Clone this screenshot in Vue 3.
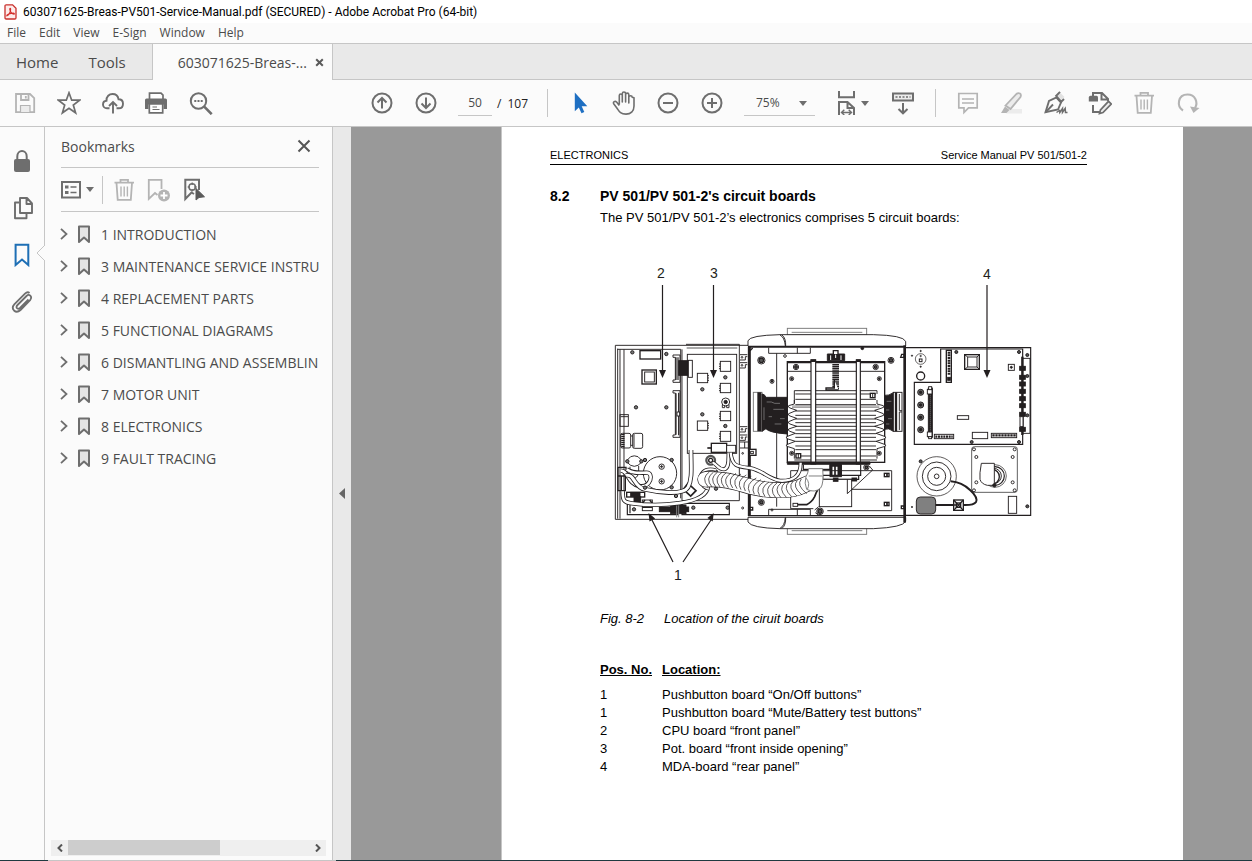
<script setup>
import { ref } from 'vue'

const menus = ['File', 'Edit', 'View', 'E-Sign', 'Window', 'Help']
const page = ref('50')
const zoom = ref('75%')
const bookmarks = [
  '1 INTRODUCTION',
  '3 MAINTENANCE SERVICE INSTRU',
  '4 REPLACEMENT PARTS',
  '5 FUNCTIONAL DIAGRAMS',
  '6 DISMANTLING AND ASSEMBLIN',
  '7 MOTOR UNIT',
  '8 ELECTRONICS',
  '9 FAULT TRACING',
]
const boards = [
  ['1', 'Pushbutton board “On/Off buttons”'],
  ['1', 'Pushbutton board “Mute/Battery test buttons”'],
  ['2', 'CPU board “front panel”'],
  ['3', 'Pot. board “front inside opening”'],
  ['4', 'MDA-board “rear panel”'],
]

const frontDots = [[97, 97], [199, 102], [108, 262], [199, 262], [82, 424], [124, 424], [135, 420], [215, 420], [215, 502], [135, 503], [228, 528], [102, 568], [307, 208], [376, 172], [307, 283], [376, 318], [280, 563], [383, 563], [348, 455], [303, 480], [348, 506]]
const frontChips = [[361, 124, 30], [361, 190, 28], [361, 274, 28], [361, 334, 30]]
const midChips = [[292, 160], [292, 303]]
const hinges = [104, 128, 320, 345]
const fins = [222, 238, 254, 273, 286, 297, 308, 319, 330, 341, 352, 364, 378, 389, 408]
const coolDots = [[168, 141, 8], [407, 141, 8], [155, 176, 6], [418, 176, 6], [155, 400, 6], [418, 400, 6], [64, 121, 11], [453, 121, 9], [96, 184, 6], [64, 547, 9], [240, 574, 10], [379, 442, 8]]
const bellowsLeft = 'M163 240V252L146 257Q142 261 150 264L170 271L146 281Q142 285 150 288L170 295L146 305Q142 309 150 312L170 319L146 327Q142 331 150 334L166 340L140 350Q136 354 144 357L166 364L140 374Q136 378 144 380L163 386V416'
const bellowsRight = 'M411 240V252L430 257Q436 261 426 264L404 271L430 281Q436 285 426 288L404 295L430 305Q436 309 426 312L404 319L430 327Q436 331 426 334L408 340L436 350Q440 354 432 357L408 364L436 374Q440 378 432 380L411 386V416'
const ribs = [
  [-104, 478, 0], [-92, 479, 0], [-80, 479, 0], [-67, 479, 1], [-54, 480, 1], [-41, 481, 2], [-27, 482, 3],
  [-13, 484, 4], [1, 487, 6], [15, 491, 7], [29, 496, 8], [43, 501, 8], [57, 505, 6], [71, 508, 4],
  [85, 510, 2], [99, 511, 0], [113, 511, -2], [127, 510, -4], [141, 508, -6], [155, 506, -8], [169, 503, -9], [182, 499, -10],
]
const leds = [217, 255, 292, 329]
const rearDots = [[169, 96], [357, 96], [382, 105], [382, 168], [382, 286], [215, 366], [357, 366], [382, 559], [62, 424]]
const tinyDots = [[62, 93], [36, 107], [62, 140], [36, 561]]
const plugs = [145, 172, 192, 214, 236, 257, 283, 328]
const mountDots = [[222, 388], [344, 388], [229, 411], [338, 411], [229, 487], [338, 487], [222, 511], [344, 511]]
</script>

<template>
  <div class="app">
    <header class="titlebar">
      <svg class="logo" width="13" height="16" viewBox="0 0 13 16">
        <path d="M1 2Q1 .8 2.2 .8H8.6L12 4.2V13.8Q12 15 10.8 15H2.2Q1 15 1 13.8Z" fill="#fdeceb" stroke="#c9302c" stroke-width="1.3" />
        <path d="M3 11.8C5.2 11 6.7 7.6 6.6 5.2C6.5 3.8 5.4 4.4 5.9 5.8C6.5 8 8 9.8 10 10.2C10.8 10.2 10.4 9.2 9.2 9.2C7 9.3 4.3 10.1 3.2 11Q2.6 11.7 3 11.8Z" fill="none" stroke="#d32f2b" stroke-width="1.2" />
      </svg>
      <span>603071625-Breas-PV501-Service-Manual.pdf (SECURED) - Adobe Acrobat Pro (64-bit)</span>
    </header>

    <nav class="menubar">
      <button v-for="m in menus" :key="m" type="button">{{ m }}</button>
    </nav>

    <div class="tabs">
      <button type="button" class="tab home">Home</button>
      <button type="button" class="tab tools">Tools</button>
      <div class="doctab">
        <button type="button" class="tab file">603071625-Breas-...</button>
        <button type="button" class="close" aria-label="Close tab">
          <svg width="9" height="9" viewBox="0 0 9 9"><path d="M1.2 1.2L7.8 7.8M7.8 1.2L1.2 7.8" stroke="#5a5a5a" stroke-width="2" /></svg>
        </button>
      </div>
    </div>

    <div class="toolbar">
      <div class="group">
        <button type="button" aria-label="Save">
          <svg viewBox="0 0 24 24"><g fill="none" stroke="#b4b4b4" stroke-width="1.8"><path d="M3 3H17L21.200 7.200V21.200H3Z" /><path d="M8 3V9H15.500V3" /><path d="M7.500 21V14.500H17V21" fill="#ececec" stroke-width="1.2" /><path d="M12.800 5V7.500" /></g></svg>
        </button>
        <button type="button" aria-label="Add to favourites">
          <svg viewBox="0 0 24 24"><path d="M12 1.800L14.700 9.200H22.600L16.300 14L18.600 21.800L12 17.200L5.400 21.800L7.700 14L1.400 9.200H9.300Z" fill="none" stroke="#6e6e6e" stroke-width="1.700" stroke-linejoin="miter" /></svg>
        </button>
        <button type="button" aria-label="Upload to cloud">
          <svg viewBox="0 0 24 24"><g fill="none" stroke="#6e6e6e" stroke-width="1.900"><path d="M8.500 17.300H6C3.500 17.300 2 15.600 2 13.500C2 11.200 3.700 9.800 5.500 9.700C5.300 5.500 8.200 3 11.500 3C14.700 3 17 5.200 17.500 8.200C20.200 8.200 22 10 22 12.700C22 15.400 20.300 17.300 17.800 17.300H15.500" /><path d="M12 22.500V11.500M8 15L12 11L16 15" /></g></svg>
        </button>
        <button type="button" aria-label="Print">
          <svg viewBox="0 0 24 24"><path d="M4.500 8V2.200H16L18 4.200V8" fill="#fff" stroke="#6e6e6e" stroke-width="1.700" /><path d="M0 9Q0 7.500 1.500 7.500H20.500Q22 7.500 22 9V18H18.500V13.500H3.500V18H0Z" fill="#6e6e6e" /><path d="M4.300 13H17.700V21.800H4.300Z" fill="#fff" stroke="#6e6e6e" stroke-width="1.700" /><path d="M7.500 16H12M7.500 18.500H14.500" stroke="#6e6e6e" stroke-width="1.200" /></svg>
        </button>
        <button type="button" aria-label="Find">
          <svg viewBox="0 0 24 24"><circle cx="9.500" cy="10" r="7.700" fill="none" stroke="#6e6e6e" stroke-width="2" /><path d="M15.200 15.700L22.700 23.200" stroke="#6e6e6e" stroke-width="2.600" /><path d="M5.300 10H7.300M8.500 10H10.500M11.700 10H13.700" stroke="#6e6e6e" stroke-width="2" /></svg>
        </button>
      </div>

      <div class="group pagenav">
        <button type="button" aria-label="Previous page">
          <svg viewBox="0 0 24 24" fill="none" stroke="#6e6e6e" stroke-width="2"><circle cx="12" cy="12" r="9.500" /><path d="M12 17.500V7.500M7.500 11.500L12 7L16.500 11.500" /></svg>
        </button>
        <button type="button" aria-label="Next page">
          <svg viewBox="0 0 24 24" fill="none" stroke="#6e6e6e" stroke-width="2"><circle cx="12" cy="12" r="9.500" /><path d="M12 6.500V16.500M7.500 12.500L12 17L16.500 12.500" /></svg>
        </button>
        <input v-model="page" class="pageno" aria-label="Page number" />
        <span class="total"><span>/</span><span>107</span></span>
      </div>

      <div class="group view">
        <button type="button" aria-label="Select">
          <svg viewBox="0 0 24 24"><path d="M6.800 1.500V20.300L10.800 16.400L13.500 22.200L16.300 20.900L13.700 15.200H19.300Z" fill="#1e6fc2" /></svg>
        </button>
        <button type="button" aria-label="Pan">
          <svg viewBox="0 0 24 24"><path d="M7.300 13.500V4.600C7.300 2.500 10.300 2.500 10.300 4.600V11V2.700C10.300 .5 13.600 .5 13.600 2.700V11V3.500C13.600 1.600 16.800 1.600 16.800 3.500V12V6.200C16.800 4.200 20.200 4.200 20.200 6.200L22 6.800V15C22 20.500 18.500 23.100 14 23.100C8.500 23.100 7.200 20.500 5.200 17.500L1.700 12.700C.8 11 3 9.500 4.600 11L7.300 14.500" fill="none" stroke="#6e6e6e" stroke-width="1.600" stroke-linejoin="round" /></svg>
        </button>
        <button type="button" aria-label="Zoom out">
          <svg viewBox="0 0 24 24" fill="none" stroke="#6e6e6e" stroke-width="2"><circle cx="12" cy="12" r="9.500" /><path d="M7 12H17" /></svg>
        </button>
        <button type="button" aria-label="Zoom in">
          <svg viewBox="0 0 24 24" fill="none" stroke="#6e6e6e" stroke-width="2"><circle cx="12" cy="12" r="9.500" /><path d="M7 12H17M12 7V17" /></svg>
        </button>
        <label class="zoombox">
          <select v-model="zoom" aria-label="Zoom level"><option>50%</option><option>75%</option><option>100%</option></select>
          <svg class="caret" viewBox="0 0 8 5"><path d="M0 0H8L4 5Z" fill="#6e6e6e" /></svg>
        </label>
        <button type="button" class="fit" aria-label="Fit width">
          <svg viewBox="0 0 24 24"><g fill="none" stroke="#6e6e6e" stroke-width="2"><path d="M4 0V6.200H19V0M4 24V11H12.500L19 17V24M12.500 11V17H19" /><path d="M7 21.500H16M9.300 18.800L6.500 21.500L9.300 24M13.700 18.800L16.500 21.500L13.700 24" stroke-width="1.400" /></g></svg>
          <svg class="caret" viewBox="0 0 8 5"><path d="M0 0H8L4 5Z" fill="#6e6e6e" /></svg>
        </button>
        <button type="button" aria-label="Page display">
          <svg viewBox="0 0 24 24" fill="none" stroke="#6e6e6e" stroke-width="2"><path d="M2 2.500H22V9.500H2Z" fill="#ececec" /><path d="M4.500 6H19.500" stroke-dasharray="2 1.500" stroke-width="1.600" /><path d="M12 12V22M7.500 18L12 22.300L16.500 18" /></svg>
        </button>
      </div>

      <div class="group edit">
        <button type="button" aria-label="Comment">
          <svg viewBox="0 0 24 24" fill="none" stroke="#b4b4b4" stroke-width="1.700"><path d="M2.800 2.500H21.200V16.800H12.500L8 21.500V16.800H2.800Z" /><path d="M6 8H18M6 12H18" stroke-width="1.400" /></svg>
        </button>
        <button type="button" aria-label="Highlight">
          <svg viewBox="0 0 24 24"><path d="M9 18H22V22.500H6Z" fill="#ececec" /><path d="M5.500 14.500L16.500 3Q18 1.700 20 2.500Q21.500 3.500 20.500 6L10.500 18Z" fill="#ececec" stroke="#b4b4b4" stroke-width="1.800" /><path d="M5 15.500L9.500 19L6.500 22H1Z" fill="#b4b4b4" /></svg>
        </button>
        <button type="button" aria-label="Sign">
          <svg viewBox="0 0 24 24"><path d="M12.500 4.500L15.500 1L20.500 6L17.500 8.500Z" fill="#e2e2e2" /><g fill="none" stroke="#6e6e6e" stroke-width="1.900"><path d="M1.500 21.300L5 10L12.500 6.500L17 11.500L14 18.500Z" /><path d="M1.500 21.300L9 13.500M11.500 5.500L16 .8M16.500 11.500L20 8M12.500 5.500L17.500 11" /><path d="M12.500 21.500L15.500 19.500L15.800 21.500L18.500 17.500L18.500 21.300L21.200 17.500L21.500 21.500H23.500" stroke-width="1.500" /></g></svg>
        </button>
        <button type="button" aria-label="Edit page">
          <svg viewBox="0 0 24 24"><g fill="none" stroke="#6e6e6e" stroke-width="2"><path d="M5 5V2H14L20 8V10M13.500 2V8.500H19M5 14V21H12" /></g><path d="M.8 6.500Q.8 4.800 2.500 4.800H8.500Q10 4.800 10 6.500V10.500H.8Z" fill="#6e6e6e" /><path d="M12.500 18.800L20.500 10.300L23.200 13L15 21.500L11.500 22.500Z" fill="#ececec" stroke="#6e6e6e" stroke-width="1.700" /></svg>
        </button>
        <button type="button" aria-label="Delete">
          <svg viewBox="0 0 24 24" fill="none" stroke="#b4b4b4" stroke-width="1.800"><path d="M2.500 4.700H22M8.500 4.500V1.800H16V4.500M4.500 5L5.700 21.800H18.800L20 5" /><path d="M9 8.500V18.500M12.200 8.500V18.500M15.400 8.500V18.500" stroke-width="1.400" /></svg>
        </button>
        <button type="button" aria-label="Rotate">
          <svg viewBox="0 0 24 24"><path d="M7 19.500C.5 15.500 1.500 3.500 11.500 3.500C19.500 3.500 22.300 11.500 19 17" fill="none" stroke="#b4b4b4" stroke-width="2.100" /><path d="M14 15.500L23.500 17L17.500 22Z" fill="#b4b4b4" /></svg>
        </button>
      </div>
    </div>

    <div class="body">
      <aside class="rail">
        <button type="button" aria-label="Security">
          <svg viewBox="0 0 24 24"><path d="M7.300 12V7.500C7.300 .2 16.700 .2 16.700 7.500V12" fill="none" stroke="#6e6e6e" stroke-width="2" /><rect x="4" y="10" width="16" height="13" rx="2" fill="#6e6e6e" /></svg>
        </button>
        <button type="button" aria-label="Page thumbnails">
          <svg viewBox="0 0 24 24" fill="none" stroke="#6e6e6e" stroke-width="1.900" stroke-linejoin="round"><path d="M10 2H17L22 7.500V17H10ZM16.500 2V8H22" /><path d="M9 6.500H5V22.300H16.500V18" /></svg>
        </button>
        <button type="button" class="active" aria-label="Bookmarks">
          <svg viewBox="0 0 24 24"><path d="M5.600 1.800H18.300V22L12 16.500L5.600 22Z" fill="none" stroke="#1e6fb5" stroke-width="2" /></svg>
          <svg class="notch" viewBox="0 0 9 16"><path d="M9 0L1 8L9 16" fill="#fbfbfb" stroke="#c6c6c6" /></svg>
        </button>
        <button type="button" aria-label="Attachments">
          <svg viewBox="0 0 24 24"><path d="M18.500 9.500L10 18Q8 19.500 6.800 18Q6 16.500 7.500 15L16.500 6Q18.500 4 20.300 5.700Q22 7.500 20.300 9.800L10.500 20Q7 23.300 4 20.500Q1.300 17.700 4.500 14.200L15 3.700Q17.500 1.200 19.500 3" fill="none" stroke="#6e6e6e" stroke-width="1.800" /></svg>
        </button>
      </aside>

      <section class="panel">
        <div class="phead">
          <h2>Bookmarks</h2>
          <button type="button" aria-label="Close panel"><svg width="14" height="14" viewBox="0 0 14 14"><path d="M1.500 1.500L12.500 12.500M12.500 1.500L1.500 12.500" stroke="#555" stroke-width="2" /></svg></button>
        </div>
        <div class="ptools">
          <button type="button" class="opts" aria-label="Options">
            <svg width="20" height="18" viewBox="0 0 20 18"><rect x="1" y="1" width="18" height="15.500" fill="none" stroke="#6e6e6e" stroke-width="2" /><path d="M4 6H7.500M4 11.500H7.500" stroke="#6e6e6e" stroke-width="3" /><path d="M9.500 6H15.500M9.500 11.500H15.500" stroke="#6e6e6e" stroke-width="1.600" /></svg>
            <svg class="caret" viewBox="0 0 8 5"><path d="M0 0H8L4 5Z" fill="#6e6e6e" /></svg>
          </button>
          <button type="button" aria-label="Delete bookmark">
            <svg viewBox="0 0 24 24" fill="none" stroke="#b4b4b4" stroke-width="1.800"><path d="M2.500 4.700H22M8.500 4.500V1.800H16V4.500M4.500 5L5.700 21.800H18.800L20 5" /><path d="M9 8.500V18.500M12.200 8.500V18.500M15.400 8.500V18.500" stroke-width="1.400" /></svg>
          </button>
          <button type="button" aria-label="New bookmark">
            <svg viewBox="0 0 24 24"><path d="M10.500 17L8 15L1.800 21V1.800H14.500V11" fill="none" stroke="#b4b4b4" stroke-width="1.800" /><circle cx="17" cy="17.500" r="6" fill="#b4b4b4" /><path d="M13.500 17.500H20.500M17 14V21" stroke="#fff" stroke-width="1.800" /></svg>
          </button>
          <button type="button" aria-label="Find current bookmark">
            <svg viewBox="0 0 24 24"><path d="M12 16L9.500 14.500L3.300 21V1.800H17V12" fill="none" stroke="#6e6e6e" stroke-width="2" /><circle cx="10.200" cy="9" r="3.200" fill="none" stroke="#6e6e6e" stroke-width="1.500" /><path d="M10.200 4.500V7M10.200 11V13.500M5.700 9H8M12.400 9H14.700" stroke="#6e6e6e" stroke-width="1.300" /><path d="M14 10.500V22L17 19.500L22.500 18.800Z" fill="#5a5a5a" stroke="#5a5a5a" /></svg>
          </button>
        </div>
        <ul class="list">
          <li v-for="b in bookmarks" :key="b">
            <button type="button" :aria-label="'Expand ' + b"><svg width="8" height="12" viewBox="0 0 8 12"><path d="M1 .8L6.500 6L1 11.200" fill="none" stroke="#6e6e6e" stroke-width="1.800" /></svg></button>
            <svg class="mark" width="14" height="19" viewBox="0 0 14 19"><path d="M2 1.500H12V17L7 12.500L2 17Z" fill="#e4e4e4" stroke="#6e6e6e" stroke-width="2" stroke-linejoin="round" /></svg>
            <a href="#">{{ b }}</a>
          </li>
        </ul>
        <div class="scroll">
          <button type="button" aria-label="Scroll left"><svg width="6" height="8" viewBox="0 0 6 8"><path d="M5 .5L1.500 4L5 7.500" fill="none" stroke="#555" stroke-width="2" /></svg></button>
          <div class="track"><div class="thumb"></div></div>
          <button type="button" aria-label="Scroll right"><svg width="6" height="8" viewBox="0 0 6 8"><path d="M1 .5L4.500 4L1 7.500" fill="none" stroke="#555" stroke-width="2" /></svg></button>
        </div>
      </section>

      <button type="button" class="splitter" aria-label="Collapse panel">
        <svg width="6" height="11" viewBox="0 0 6 11"><path d="M6 0V11L0 5.500Z" fill="#666" /></svg>
      </button>

      <main class="doc">
        <article class="page">
          <div class="running"><span>ELECTRONICS</span><span>Service Manual PV 501/501-2</span></div>
          <h1><span>8.2</span><span>PV 501/PV 501-2's circuit boards</span></h1>
          <p class="lead">The PV 501/PV 501-2’s electronics comprises 5 circuit boards:</p>

          <figure>
            <svg class="drawing" viewBox="0 0 440 330" fill="none" stroke="#231f20">
              <!-- front panel -->
              <g transform="translate(0 60) scale(.33333)" stroke-width="2.800">
                <path d="M46 76H444M46 76V598H444M53 86V596M60 88V596M72 88V530M52 88H242" />
                <path d="M258 73H418V542H246M246 88V542M242 88V535" />
                <path d="M260 84H412" stroke-width="6" stroke="#aaa" />
                <rect x="262" y="103" width="148" height="297" />
                <rect x="120" y="92" width="62" height="25" stroke-width="4" />
                <rect x="126" y="150" width="43" height="42" stroke-width="4" /><rect x="134" y="156" width="29" height="30" />
                <path d="M219 105H240V187H219V180H226V112H219ZM219 212H240V352H219V345H226V219H219Z" fill="#fff" />
                <path d="M228 112V180M234 112V180M228 220V344M236 218V346" stroke-width="3.500" />
                <rect x="236" y="122" width="29" height="44" fill="#231f20" />
                <rect x="265" y="121" width="12" height="51" fill="#fff" />
                <rect x="231" y="276" width="8" height="12" fill="#fff" />
                <rect x="60" y="284" width="25" height="35" /><path d="M62 290H84" />
                <rect x="62" y="340" width="30" height="44" rx="5" /><path d="M66 342V383M71 342V383" stroke-width="5" stroke-dasharray="4 2" />
                <rect x="98" y="340" width="30" height="45" rx="5" /><path d="M93 348H98M93 376H98M102 342V383" />
                <circle cx="180" cy="460" r="50" />
                <circle cx="185" cy="440" r="8" /><circle cx="185" cy="484" r="8" />
                <path d="M180 440H190M185 435V445M180 484H190M185 479V489" />
                <path d="M78 424L92 410Q103 405 114 410L128 424L114 436Q103 442 92 436Z" fill="#fff" />
                <path d="M90 440V470Q104 485 116 462V438" />
                <g v-for="c in frontChips" :key="'f' + c[1]"><rect :x="c[0]" :y="c[1]" width="31" :height="c[2]" /><path :d="`M357 ${c[1] + 8}H361M357 ${c[1] + 15}H361M357 ${c[1] + 22}H361`" /></g>
                <g v-for="c in midChips" :key="'m' + c[1]"><rect :x="c[0]" :y="c[1]" width="31" height="28" /><path :d="`M323 ${c[1] + 7}H327M323 ${c[1] + 14}H327M323 ${c[1] + 21}H327`" /></g>
                <circle cx="377" cy="246" r="12" /><circle cx="377" cy="246" r="5" fill="#231f20" /><path d="M367 254V263H374V256M380 256V263H387V254" />
                <rect x="334" y="370" width="46" height="27" fill="#fff" stroke-width="4" /><rect x="380" y="376" width="27" height="21" fill="#fff" /><path d="M322 384H334" stroke-width="5" />
                <circle cx="332" cy="421" r="13" stroke-width="7" stroke="#555" /><circle cx="332" cy="421" r="6" stroke-width="4" />
                <g v-for="h in hinges" :key="h"><path :d="`M420 ${h}H442M420 ${h + 16}H436V${h + 6}H442`" /><circle cx="426" :cy="h + 8" r="2.500" /></g>
                <path d="M420 366H444M420 384H444M434 366V384" />
                <circle cx="428" cy="400" r="2.500" /><circle cx="428" cy="564" r="3" />
                <path d="M82 540V584H236M90 550V580M246 550H388V584H246Z M82 552H226" stroke-width="3.500" />
                <rect x="127" y="540" width="30" height="32" /><path d="M127 550H157L149 540M127 562H157M135 540L127 550" stroke-width="4" />
                <rect x="80" y="517" width="54" height="14" stroke-width="4" /><rect x="92" y="517" width="28" height="13" fill="#231f20" /><rect x="102" y="530" width="20" height="20" fill="#231f20" />
                <rect x="178" y="561" width="88" height="14" fill="#231f20" /><rect x="212" y="555" width="46" height="26" fill="#231f20" /><path d="M230 545V592M236 545V592" stroke="#888" />
                <path d="M54 442V512H76V468H54M54 442H78V458M64 468V512" stroke-width="4" />
                <path d="M264 490L288 512L272 528L250 508Z" fill="#fff" stroke-width="5" />
                <g fill="none">
                  <path d="M62 452C86 452 82 492 118 498S162 458 140 458S100 462 80 448" stroke-width="13" />
                  <path d="M62 452C86 452 82 492 118 498S162 458 140 458S100 462 80 448" stroke="#fff" stroke-width="8" />
                  <path d="M78 466C104 460 100 500 134 508S250 528 264 502S273 440 273 390" stroke-width="14" />
                  <path d="M78 466C104 460 100 500 134 508S250 528 264 502S273 440 273 390" stroke="#fff" stroke-width="9" />
                  <path d="M68 514C68 540 70 548 96 550C170 560 322 556 324 498" stroke-width="13" />
                  <path d="M68 514C68 540 70 548 96 550C170 560 322 556 324 498" stroke="#fff" stroke-width="8" />
                  <path d="M338 428C352 432 352 448 372 448C390 446 384 410 386 398" stroke-width="12" />
                  <path d="M338 428C352 432 352 448 372 448C390 446 384 410 386 398" stroke="#fff" stroke-width="7" />
                </g>
                <g v-for="(d, i) in frontDots" :key="'d' + i"><circle :cx="d[0]" :cy="d[1]" r="5" stroke-width="3" fill="#777" /></g>
              </g>

              <!-- cooling unit -->
              <g transform="translate(140 60) scale(.33333)" stroke-width="2.800">
                <rect x="142" y="25" width="238" height="20" stroke="#777" /><path d="M155 37H367M155 632H367" stroke="#777" />
                <rect x="142" y="622" width="238" height="21" stroke="#777" />
                <path d="M24 78V62Q30 46 120 44H400Q490 46 497 64V78M24 592V606Q34 624 120 626H400Q490 622 497 604V592" fill="#fff" />
                <path d="M120 45Q134 52 136 78M126 45Q138 54 137 78M120 625Q134 618 136 592M126 625Q138 616 137 592" />
                <path d="M24 80H496" stroke-width="6" /><path d="M24 587H496" stroke-width="4" /><path d="M24 592H496" />
                <path d="M28 80V588" stroke-width="9" /><path d="M494 76V608" stroke-width="8" />
                <path d="M86 83V100H211V83M172 83V100M110 100V560M86 587V568H211V587M172 568V587" />
                <path d="M30 92L38 84M485 103H492V112H482ZM30 562H38V570H30M484 558H492V566H484Z" stroke-width="4" />
                <rect x="28" y="388" width="20" height="18" fill="#fff" stroke-width="4" /><rect x="32" y="394" width="8" height="7" />
                <circle cx="135" cy="108" r="4" /><circle cx="367" cy="85" r="4" fill="#231f20" /><circle cx="96" cy="570" r="3" />
                <g v-for="(d, i) in coolDots" :key="i"><circle :cx="d[0]" :cy="d[1]" :r="d[2]" /><circle :cx="d[0]" :cy="d[1]" :r="d[2] - 4" fill="#555" stroke-width="4" /></g>

                <rect x="142" y="125" width="292" height="302" fill="none" stroke-width="4" /><path d="M142 154H434" /><path d="M142 128H434" stroke-width="4" />
                <rect x="40" y="217" width="26" height="117" fill="#fff" stroke="#777" /><path d="M55 217V334M61 217V334" stroke-width="6" />
                <path d="M66 222Q74 222 78 232H142V342Q86 338 78 326L66 334Z" fill="#231f20" />
                <path d="M80 246H94L104 250H120M100 268H132M86 290H96M104 312H124M120 296H134M72 262V300" stroke="#bbb" stroke-width="1.500" />
                <path d="M434 226Q446 228 460 218V334Q446 322 434 328Z" fill="#231f20" /><path d="M440 244H454M438 270H448M444 296H456M438 312H448" stroke="#bbb" stroke-width="1.500" />
                <rect x="460" y="217" width="26" height="117" fill="#fff" /><path d="M468 217V334" stroke-width="7" /><path d="M478 222V272H486M478 330V276H486" />

                <path d="M163 212H411V222M163 212V250" /><path :d="bellowsLeft" fill="#fff" /><path :d="bellowsRight" fill="#fff" />
                <path v-for="f in fins" :key="f" :d="`M166 ${f}H408`" />
                <path d="M156 258H418M156 262H418" stroke-width="1.500" />
                <rect x="391" y="220" width="14" height="13" fill="#fff" stroke-width="4" /><path d="M398 220V233" /><rect x="168" y="401" width="14" height="13" fill="#fff" stroke-width="4" /><path d="M175 401V414" />
                <path d="M163 420H411" />
                <rect x="213" y="120" width="14" height="312" fill="#fff" stroke-width="3.500" /><rect x="349" y="120" width="12" height="312" fill="#fff" stroke-width="3.500" />
                <path d="M212 122H228M348 122H362" stroke-width="8" />
                <path d="M287 132V210" stroke-width="20" stroke-dasharray="4 1.500" /><path d="M283 180V204H258V210H296" stroke="#231f20" stroke-width="4" fill="#fff" />
                <path d="M262 102H314V122H262Z" fill="#231f20" /><path d="M280 92H294V104H280ZM272 108V118M304 108V118" stroke-width="4" fill="#fff" /><path d="M272 106V120M303 106V120M287 104V114" stroke="#fff" stroke-width="3" />
                <path d="M142 426H390V433H142Z" fill="#231f20" />
                <rect x="270" y="430" width="34" height="40" fill="#231f20" /><path d="M280 440V466M290 440V466" stroke="#fff" stroke-width="5" />
                <path d="M190 434V448H270V434M304 434V466H362V434M236 466H356V478H236M248 478V466" stroke-width="3.500" />
                <path d="M152 452H455V572H262M152 452V566H220" /><path d="M335 508H455" />
                <rect x="238" y="478" width="97" height="82" fill="#fff" /><rect x="280" y="474" width="14" height="10" fill="#231f20" />
                <path d="M322 478V521L398 450L388 438" /><rect x="336" y="474" width="14" height="9" fill="#231f20" />
                <rect x="433" y="460" width="14" height="10" stroke-width="4" /><path d="M441 461V469" stroke-width="5" /><rect x="433" y="547" width="14" height="10" stroke-width="4" /><path d="M441 548V556" stroke-width="5" />
                <path d="M166 554H200Q216 546 224 530Q230 514 234 508" stroke-width="5" /><rect x="159" y="550" width="14" height="9" fill="#fff" />
                <path d="M224 570L236 560M226 578L236 586" />

                <!-- corrugated hose -->
                <path d="M-72 450C-110 440 -124 464 -118 486Q-112 502 -96 506" stroke-width="10" />
                <path d="M-72 450C-110 440 -124 464 -118 486Q-112 502 -96 506" stroke="#fff" stroke-width="5" />
                <path d="M-104 478C-10 474 20 508 96 510S176 502 204 490" stroke-width="48" stroke-linecap="round" />
                <path d="M-104 478C-10 474 20 508 96 510S176 502 204 490" stroke="#fff" stroke-width="44" stroke-linecap="round" />
                <path v-for="r in ribs" :key="r[0]" :d="`M${r[0] + 12 + r[2]} ${r[1] - 22}Q${r[0] - 14} ${r[1] - 4} ${r[0] + 8 - r[2]} ${r[1] + 22}`" stroke-width="2.200" />
                <path d="M-28 398C-24 440 -6 440 30 444C70 452 84 476 120 482C160 484 182 468 182 428" stroke-width="12" />
                <path d="M-28 398C-24 440 -6 440 30 444C70 452 84 476 120 482C160 484 182 468 182 428" stroke="#fff" stroke-width="7" />
                <path d="M206 446Q204 460 198 470Q192 490 200 508Q224 520 242 504Q252 490 248 446Z" fill="#fff" stroke="#777" /><path d="M206 468H248M198 474Q212 490 202 508" stroke="#777" />
              </g>

              <!-- rear panel -->
              <g transform="translate(300 60) scale(.33333)" stroke-width="2.800">
                <path d="M16 83H392V586H16" stroke-width="3.500" />
                <path d="M122 87H368V373H43V187H122Z" stroke-width="3.500" />
                <rect x="368" y="115" width="22" height="225" />
                <path d="M367 110V345" stroke-width="7" /><rect v-for="p in plugs" :key="p" x="359" :y="p - 6" width="17" height="12" fill="#231f20" />
                <rect x="360" y="290" width="9" height="30" fill="#fff" />
                <rect x="139" y="91" width="15" height="96" stroke-width="4" /><path d="M147 95V164" stroke-width="8" stroke-dasharray="6 2" /><rect x="143" y="172" width="8" height="9" fill="#231f20" />
                <rect x="194" y="104" width="44" height="44" stroke-width="4" /><rect x="203" y="111" width="28" height="30" /><path d="M194 104L203 111M238 104L231 111M194 148L203 141M238 148L231 141" />
                <rect x="325" y="133" width="18" height="18" /><circle cx="334" cy="142" r="3" fill="#231f20" />
                <circle cx="62" cy="117" r="16" stroke-width="2" /><rect x="58" y="117" width="8" height="8" stroke-width="3" /><circle cx="62" cy="108" r="2" />
                <circle cx="62" cy="168" r="12" stroke-width="4" />
                <g v-for="l in leds" :key="l"><circle cx="62" :cy="l" r="9" fill="#777" stroke-width="3" /><circle cx="62" :cy="l" r="4" fill="#231f20" /></g>
                <rect x="85" y="204" width="12" height="148" fill="#231f20" /><path d="M91 214V342" stroke="#999" stroke-width="2" stroke-dasharray="3 3" />
                <rect x="82" y="208" width="14" height="14" fill="#fff" /><rect x="86" y="200" width="9" height="9" fill="#fff" /><rect x="82" y="336" width="14" height="14" fill="#fff" /><rect x="86" y="350" width="9" height="6" fill="#fff" />
                <rect x="172" y="287" width="34" height="11" /><rect x="217" y="337" width="46" height="19" />
                <rect x="103" y="343" width="58" height="13" /><path d="M106 350H158" stroke-width="7" stroke-dasharray="6 2" />
                <rect x="274" y="340" width="76" height="13" /><path d="M277 346H347" stroke-width="7" stroke-dasharray="7 2" />
                <circle cx="110" cy="469" r="59" stroke-width="2.200" /><circle cx="110" cy="469" r="43" /><circle cx="110" cy="469" r="27" /><circle cx="110" cy="469" r="7" />
                <rect x="215" y="380" width="137" height="137" rx="8" stroke="#555" />
                <circle v-for="(d, i) in mountDots" :key="'o' + i" :cx="d[0]" :cy="d[1]" r="4.500" />
                <circle cx="285" cy="468" r="34" stroke-width="2" /><circle cx="285" cy="468" r="28" stroke-width="3.500" /><circle cx="281" cy="468" r="23" /><circle cx="276" cy="470" r="22" stroke-width="4" />
                <path d="M244 430H283V496H262Q244 492 240 478V458Z" fill="#fff" /><circle cx="283" cy="496" r="5" fill="#231f20" />
                <path d="M152 484C200 488 236 530 228 546Q222 556 190 555H107" stroke-width="6" />
                <rect x="49" y="531" width="58" height="51" rx="12" fill="#808080" /><rect x="161" y="540" width="29" height="31" stroke-width="4" fill="#fff" /><rect x="169" y="549" width="13" height="13" stroke-width="4" /><path d="M161 540L190 571M190 540L161 571M107 555H169" stroke-width="4" />
                <rect x="325" y="529" width="25" height="51" />
                <g v-for="(d, i) in rearDots" :key="'r' + i"><circle :cx="d[0]" :cy="d[1]" r="4.500" stroke-width="3" fill="#555" /></g>
                <circle v-for="(d, i) in tinyDots" :key="'t' + i" :cx="d[0]" :cy="d[1]" r="2" fill="#231f20" stroke-width="2" />
              </g>

              <!-- callouts -->
              <g fill="#231f20">
                <path d="M62.500 25V112M113.500 25V112M387 25V112M73 302L52 260M83 302L111 260" stroke-width="1.200" />
                <path d="M59 110H66L62.500 118ZM110 110H117L113.500 118ZM383.500 110H390.500L387 118ZM48.500 253L55.200 258.500L49.500 261.500ZM113.700 253L112.700 261.500L107.400 258Z" stroke="none" />
                <g class="num" stroke="none"><text x="57" y="18">2</text><text x="110" y="18">3</text><text x="383" y="19">4</text><text x="74" y="320">1</text></g>
              </g>
            </svg>
            <figcaption><span>Fig. 8-2</span><span>Location of the ciruit boards</span></figcaption>
          </figure>

          <table>
            <thead><tr><th>Pos. No.</th><th>Location:</th></tr></thead>
            <tbody><tr v-for="(r, i) in boards" :key="i"><td>{{ r[0] }}</td><td>{{ r[1] }}</td></tr></tbody>
          </table>
        </article>
      </main>
    </div>
    <footer class="edge"></footer>
  </div>
</template>

<style>
body { margin: 0; }
</style>

<style scoped>
.app { display: flex; flex-direction: column; height: 100vh; overflow: hidden; background: #fbfbfb; color: #4b4b4b; font-family: "Open Sans", "Noto Sans", sans-serif; }
button { border: 0; padding: 0; margin: 0; background: none; font: inherit; color: inherit; display: flex; align-items: center; justify-content: center; flex: none; }
svg { display: block; flex: none; }
.titlebar { display: flex; align-items: center; gap: 6px; height: 23px; padding-left: 4px; background: #fff; color: #000; font-family: Roboto, "Open Sans", sans-serif; font-size: 12px; white-space: nowrap; }
.menubar { display: flex; align-items: center; gap: 13px; height: 18px; padding: 0 0 2px 7px; font-size: 12px; border-bottom: 1px solid #c6c6c6; }
.tabs { display: flex; height: 35px; background: #e9e9e9; border-bottom: 1px solid #c6c6c6; }
.tab { font-size: 15px; height: 35px; }
.home { margin-left: 16px; }
.tools { margin-left: 30px; }
.file { font-size: 14px; }
.doctab { display: flex; align-items: center; justify-content: space-between; box-sizing: border-box; width: 181px; height: 36px; margin-left: 26px; padding: 0 8px 0 25px; background: #fbfbfb; border: solid #c6c6c6; border-width: 0 1px; }
.toolbar { display: flex; align-items: center; height: 46px; padding-left: 3px; border-bottom: 1px solid #c6c6c6; }
.group { display: flex; align-items: center; }
.group > button { width: 44px; height: 44px; }
.group > button > svg { width: 24px; height: 24px; }
.pagenav { margin-left: 137px; font-size: 12px; }
.pageno { width: 34px; height: 26px; margin-left: 10px; padding: 0; border: 0; border-bottom: 1px solid #c6c6c6; background: none; text-align: center; font: inherit; color: inherit; box-sizing: border-box; }
.total { display: flex; gap: 6px; width: 50px; margin-left: 5px; color: #222; }
.view { border-left: 1px solid #c6c6c6; padding-left: 10px; height: 28px; }
.zoombox { position: relative; width: 71px; margin: 0 20px 0 10px; }
.zoombox select { appearance: none; width: 100%; height: 26px; padding: 0 0 0 12px; border: 0; border-bottom: 1px solid #c6c6c6; border-radius: 0; background: none; font: inherit; font-size: 12px; color: inherit; }
.caret { width: 8px; height: 5px; }
.zoombox .caret { position: absolute; right: 8px; top: 11px; }
.group > .fit { gap: 2px; }
.group > .fit .caret { width: 8px; height: 5px; }
.group > .fit { width: 34px; margin-right: 12px; }
.view > button:last-child { margin-right: 10px; }
.edit { border-left: 1px solid #c6c6c6; padding-left: 10px; height: 28px; }
.body { display: flex; flex: 1; min-height: 0; }
.rail { display: flex; flex-direction: column; width: 44px; padding-top: 10px; border-right: 1px solid #c6c6c6; flex: none; }
.rail button { position: relative; width: 44px; height: 47px; }
.rail button svg { width: 24px; height: 24px; }
.rail button .notch { position: absolute; right: -1px; top: 14px; width: 9px; height: 16px; }
.panel { display: flex; flex-direction: column; box-sizing: border-box; width: 288px; padding: 0 6px 4px; border-right: 1px solid #c6c6c6; flex: none; }
.phead { display: flex; align-items: center; justify-content: space-between; height: 38px; margin: 0 7px 0 10px; padding: 0 8px 2px 0; border-bottom: 1px solid #c6c6c6; }
.phead h2 { margin: 0; font-size: 14px; font-weight: 400; }
.ptools { display: flex; align-items: center; height: 43px; margin: 0 7px 0 10px; border-bottom: 1px solid #c6c6c6; }
.ptools button { width: 35px; height: 28px; }
.ptools button > svg:not(.caret) { height: 24px; width: 24px; }
.ptools .opts { width: 42px; gap: 5px; padding-right: 0; justify-content: flex-start; border-right: 1px solid #c6c6c6; margin-right: 3px; }
.ptools .opts > svg:not(.caret) { width: 20px; height: 18px; }
.list { flex: 1; margin: 6px 0 0 8px; padding: 0; list-style: none; overflow: hidden; }
.list li { display: flex; align-items: center; height: 32px; white-space: nowrap; font-size: 14px; }
.list button { width: 9px; height: 20px; }
.list .mark { margin: 0 10px 0 9px; }
.list a { color: inherit; text-decoration: none; }
.scroll { display: flex; height: 16px; background: #efefef; }
.scroll button { width: 17px; }
.track { flex: 1; }
.thumb { width: 63%; height: 15px; background: #cdcdcd; }
.splitter { width: 18px; background: #e9e9e9; }
.doc { display: flex; flex: 1; min-width: 0; background: #999; overflow: hidden; }
.page { flex: 1; margin: 0 69px 0 150px; padding: 20px 96px 0 48px; background: #fff; border: solid #c6c6c6; border-width: 0 0 0 1px; color: #000; font-family: "Liberation Sans", Arial, sans-serif; font-size: 13px; }
.running { display: flex; justify-content: space-between; font-size: 11px; line-height: 16px; border-bottom: 1px solid #000; padding-bottom: 1px; }
.page h1 { display: flex; margin: 23px 0 0; font-size: 14px; line-height: 16px; }
.page h1 span:first-child { width: 50px; }
.lead { margin: 4px 0 0 50px; line-height: 20px; }
figure { margin: 32px 0 0 50px; }
.drawing { width: 440px; height: 330px; }
.num { font-size: 14px; }
figcaption { display: flex; margin-top: 20px; line-height: 18px; font-style: italic; }
figcaption span:first-child { width: 64px; }
table { margin: 33px 0 0 50px; border-collapse: collapse; line-height: 18px; }
th { padding: 0 0 7px; text-align: left; text-decoration: underline; }
td { padding: 0; }
th:first-child { width: 62px; }
.edge { height: 1px; background: linear-gradient(90deg, #1f3a40 48px, #c6c6c6 48px 336px, #1f3a40 336px); }
</style>
